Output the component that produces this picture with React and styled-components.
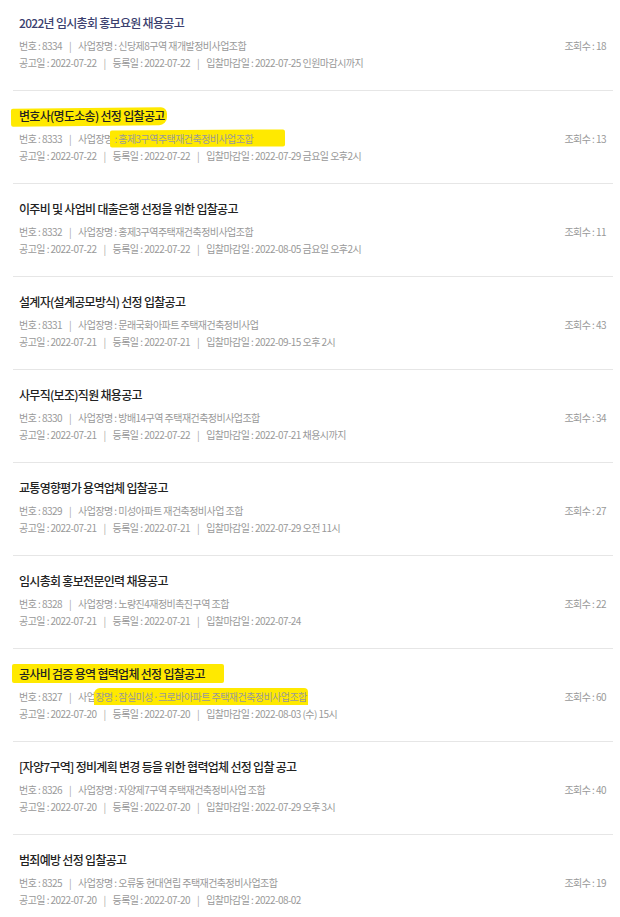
import React from "react";
import styled, { createGlobalStyle } from "styled-components";

const Global = createGlobalStyle`
  html, body { margin: 0; padding: 0; background: #fff; }
  body { font-family: "Noto Sans CJK KR", "Noto Sans", sans-serif; }
`;

const List = styled.ul`
  list-style: none;
  margin: 0;
  padding: 0 7px 0 13px;
`;

const Item = styled.li`
  padding: 15px 7px 19px 6px;
  border-bottom: 1px solid #e6e6e6;
  &:first-child { padding-top: 13px; }
`;

const Title = styled.div`
  font-size: 12px;
  line-height: 20px;
  height: 20px;
  font-weight: 500;
  letter-spacing: -0.7px;
  color: ${(p) => (p.$visited ? "#3b3f6f" : "#222")};
  white-space: nowrap;
`;

const MetaRow = styled.div`
  display: flex;
  justify-content: space-between;
  align-items: center;
  font-size: 10px;
  line-height: 17px;
  height: 17px;
  letter-spacing: -0.55px;
  color: #999;
  white-space: nowrap;
  margin-top: ${(p) => (p.$first ? "4px" : "0")};
`;

const Meta = styled.span``;

const Sep = styled.span`
  margin: 0 7px;
  color: #aaa;
`;

const Views = styled.span`
  color: #999;
`;

const Marker = styled.span`
  position: relative;
  z-index: 0;
  &::before {
    content: "";
    position: absolute;
    z-index: -1;
    left: ${(p) => p.$l}px;
    right: ${(p) => p.$r}px;
    top: ${(p) => p.$t}px;
    bottom: ${(p) => p.$b}px;
    background: #ffe900;
    border-radius: ${(p) => p.$rad || "2px"};
    transform: rotate(${(p) => p.$rot || 0}deg);
  }
`;

const items = [
  { no: 8334, biz: "신당제8구역 재개발정비사업조합", title: "2022년 임시총회 홍보요원 채용공고", views: 18, pub: "2022-07-22", reg: "2022-07-22", due: "2022-07-25 인원마감시까지", visited: true },
  { no: 8333, biz: "홍제3구역주택재건축정비사업조합", title: "변호사(명도소송) 선정 입찰공고", views: 13, pub: "2022-07-22", reg: "2022-07-22", due: "2022-07-29 금요일 오후2시", hl: 1 },
  { no: 8332, biz: "홍제3구역주택재건축정비사업조합", title: "이주비 및 사업비 대출은행 선정을 위한 입찰공고", views: 11, pub: "2022-07-22", reg: "2022-07-22", due: "2022-08-05 금요일 오후2시" },
  { no: 8331, biz: "문래국화아파트 주택재건축정비사업", title: "설계자(설계공모방식) 선정 입찰공고", views: 43, pub: "2022-07-21", reg: "2022-07-21", due: "2022-09-15 오후 2시" },
  { no: 8330, biz: "방배14구역 주택재건축정비사업조합", title: "사무직(보조)직원 채용공고", views: 34, pub: "2022-07-21", reg: "2022-07-22", due: "2022-07-21 채용시까지" },
  { no: 8329, biz: "미성아파트 재건축정비사업 조합", title: "교통영향평가 용역업체 입찰공고", views: 27, pub: "2022-07-21", reg: "2022-07-21", due: "2022-07-29 오전 11시" },
  { no: 8328, biz: "노량진4재정비촉진구역 조합", title: "임시총회 홍보전문인력 채용공고", views: 22, pub: "2022-07-21", reg: "2022-07-21", due: "2022-07-24" },
  { no: 8327, biz: "잠실미성·크로바아파트 주택재건축정비사업조합", title: "공사비 검증 용역 협력업체 선정 입찰공고", views: 60, pub: "2022-07-20", reg: "2022-07-20", due: "2022-08-03 (수) 15시", hl: 2 },
  { no: 8326, biz: "자양제7구역 주택재건축정비사업 조합", title: "[자양7구역] 정비계획 변경 등을 위한 협력업체 선정 입찰 공고", views: 40, pub: "2022-07-20", reg: "2022-07-20", due: "2022-07-29 오후 3시" },
  { no: 8325, biz: "오류동 현대연립 주택재건축정비사업조합", title: "범죄예방 선정 입찰공고", views: 19, pub: "2022-07-20", reg: "2022-07-20", due: "2022-08-02" },
];

function renderTitle(it) {
  if (it.hl === 1)
    return <Marker $l={-8} $r={-2} $t={1} $b={-2} $rot={-0.6} $rad="2px 6px 8px 2px">{it.title}</Marker>;
  if (it.hl === 2)
    return <Marker $l={-7} $r={-19} $t={-1} $b={-1}>{it.title}</Marker>;
  return it.title;
}

function renderBiz(it) {
  if (it.hl === 1)
    return (
      <>
        사업장명<Marker $l={-3} $r={-32} $t={-1} $b={-1} $rot={-0.4}> : {it.biz}</Marker>
      </>
    );
  if (it.hl === 2)
    return (
      <>
        사업<Marker $l={-1} $r={-1} $t={-1} $b={-1} $rad="6px 4px 0 0">장명 : {it.biz}</Marker>
      </>
    );
  return <>사업장명 : {it.biz}</>;
}

export default function App() {
  return (
    <>
      <Global />
      <List>
        {items.map((it) => (
          <Item key={it.no}>
            <Title $visited={it.visited}>{renderTitle(it)}</Title>
            <MetaRow $first>
              <Meta>
                번호 : {it.no}
                <Sep>|</Sep>
                {renderBiz(it)}
              </Meta>
              <Views>조회수 : {it.views}</Views>
            </MetaRow>
            <MetaRow>
              <Meta>
                공고일 : {it.pub}
                <Sep>|</Sep>
                등록일 : {it.reg}
                <Sep>|</Sep>
                입찰마감일 : {it.due}
              </Meta>
            </MetaRow>
          </Item>
        ))}
      </List>
    </>
  );
}
